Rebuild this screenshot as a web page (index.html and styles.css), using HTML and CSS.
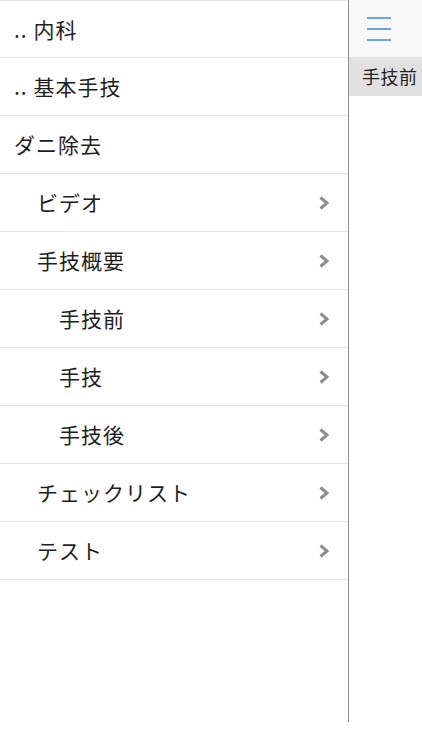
FILE: index.html
```html
<!DOCTYPE html>
<html lang="ja">

<head>
    <meta charset="UTF-8">
    <meta name="viewport" content="width=device-width, initial-scale=1.0">
    <title>ダニ除去</title>
    <link rel="stylesheet" href="styles.css">
</head>

<body>
    <div class="app">
        <nav class="menu">
            <ul class="menu-list">
                <li class="menu-item">.. 内科</li>
                <li class="menu-item">.. 基本手技</li>
                <li class="menu-item">ダニ除去</li>
                <li class="menu-item level-1">ビデオ
                    <svg class="chevron" width="12" height="14" viewBox="0 0 12 14"><polyline points="2.5,1.5 9,7 2.5,12.5" /></svg>
                </li>
                <li class="menu-item level-1">手技概要
                    <svg class="chevron" width="12" height="14" viewBox="0 0 12 14"><polyline points="2.5,1.5 9,7 2.5,12.5" /></svg>
                </li>
                <li class="menu-item level-2">手技前
                    <svg class="chevron" width="12" height="14" viewBox="0 0 12 14"><polyline points="2.5,1.5 9,7 2.5,12.5" /></svg>
                </li>
                <li class="menu-item level-2">手技
                    <svg class="chevron" width="12" height="14" viewBox="0 0 12 14"><polyline points="2.5,1.5 9,7 2.5,12.5" /></svg>
                </li>
                <li class="menu-item level-2">手技後
                    <svg class="chevron" width="12" height="14" viewBox="0 0 12 14"><polyline points="2.5,1.5 9,7 2.5,12.5" /></svg>
                </li>
                <li class="menu-item level-1">チェックリスト
                    <svg class="chevron" width="12" height="14" viewBox="0 0 12 14"><polyline points="2.5,1.5 9,7 2.5,12.5" /></svg>
                </li>
                <li class="menu-item level-1">テスト
                    <svg class="chevron" width="12" height="14" viewBox="0 0 12 14"><polyline points="2.5,1.5 9,7 2.5,12.5" /></svg>
                </li>
            </ul>
        </nav>

        <main class="page">
            <header class="page-header">
                <svg class="hamburger" width="24" height="24" viewBox="0 0 24 24">
                    <line x1="0" y1="1" x2="24" y2="1" />
                    <line x1="0" y1="12" x2="24" y2="12" />
                    <line x1="0" y1="23" x2="24" y2="23" />
                </svg>
            </header>
            <div class="page-title">手技前</div>
        </main>
    </div>
</body>

</html>
```

FILE: styles.css
```css
body {
    margin: 0;
    font-family: "Noto Sans CJK JP", "Noto Sans", sans-serif;
    color: #1e1e1e;
    background-color: #ffffff;
    overflow: hidden;
}

.app {
    display: flex;
    width: 422px;
    height: 750px;
}

.menu {
    width: 348px;
    height: 722px;
    border-right: 1px solid #8f8f8f;
    flex-shrink: 0;
}

.menu-list {
    list-style: none;
    margin: 0;
    padding: 0;
    border-top: 1px solid #e6e6e6;
}

.menu-item {
    display: flex;
    align-items: center;
    justify-content: space-between;
    height: 57px;
    padding: 0 18px 0 14px;
    border-bottom: 1px solid #e6e6e6;
    font-size: 21px;
    letter-spacing: 1px;
    line-height: 1;
}

.menu-item:first-child {
    height: 56px;
}

.level-1 {
    padding-left: 37px;
}

.level-2 {
    padding-left: 59px;
}

.chevron {
    fill: none;
    stroke: #8e8e8e;
    stroke-width: 3;
}

.page {
    flex: 1;
    min-width: 0;
}

.page-header {
    height: 57px;
    background-color: #f8f8f8;
    display: flex;
    align-items: center;
    padding-left: 18px;
}

.hamburger {
    stroke: #3d8ae3;
    stroke-width: 1.5;
}

.page-title {
    height: 39px;
    background-color: #e1e1e1;
    font-size: 18px;
    letter-spacing: 0.5px;
    line-height: 39px;
    padding-left: 13px;
    white-space: nowrap;
    color: #222222;
}
```
